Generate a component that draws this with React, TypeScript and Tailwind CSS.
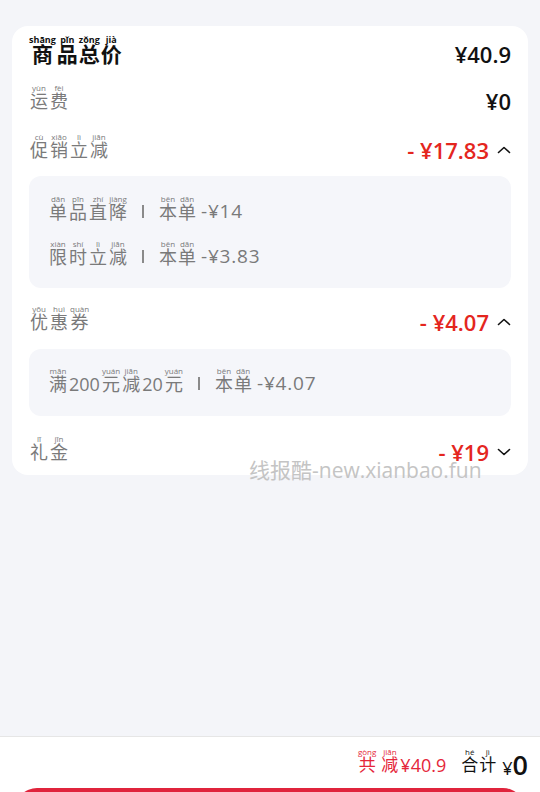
import React from "react";

type Seg = { c: string; p?: string };

const FONT = "font-['Open_Sans','Noto_Sans_CJK_SC',sans-serif]";

// one annotated character: pinyin floats above without taking layout height
function Py({ c, p, pClass, cClass }: { c: string; p: string; pClass: string; cClass: string }) {
	return (
		<span className="inline-flex flex-col items-center">
			<span className="flex h-0 flex-col justify-end">
				<span className={`whitespace-nowrap leading-none ${pClass}`}>{p}</span>
			</span>
			<span className={`leading-none ${cClass}`}>{c}</span>
		</span>
	);
}

function Label({
	segs,
	pClass,
	cClass,
	gap = "gap-[2px]",
}: {
	segs: Seg[];
	pClass: string;
	cClass: string;
	gap?: string;
}) {
	return (
		<span className={`flex items-center ${gap}`}>
			{segs.map((s, i) =>
				s.p ? (
					<Py key={i} c={s.c} p={s.p} pClass={pClass} cClass={cClass} />
				) : (
					<span key={i} className={`leading-none ${cClass}`}>
						{s.c}
					</span>
				),
			)}
		</span>
	);
}

const segs = (chars: string, pinyin: string): Seg[] => {
	const ps = pinyin.split(" ");
	return Array.from(chars).map((c, i) => ({ c, p: ps[i] }));
};

function Caret({ up }: { up: boolean }) {
	return (
		<svg width="14" height="14" viewBox="0 0 14 14" className="ml-[8px]">
			<path
				d={up ? "M1.5 9.5 L7 4.5 L12.5 9.5" : "M1.5 4.5 L7 9.5 L12.5 4.5"}
				fill="none"
				stroke="#111"
				strokeWidth="1.6"
				strokeLinecap="round"
				strokeLinejoin="round"
			/>
		</svg>
	);
}

const grayP = "text-[8px] text-[#7a7a7a]";
const grayC = "text-[18px] text-[#7a7a7a]";

function Sep() {
	return <span className="mx-[15px] h-[13px] w-[2px] bg-[#8a8a8a]" />;
}

function DetailRow({ name, amount }: { name: Seg[]; amount: string }) {
	return (
		<div className="flex h-[45px] items-center">
			<Label segs={name} pClass={grayP} cClass={grayC} />
			<Sep />
			<Label segs={segs("本单", "běn dān")} pClass={grayP} cClass={grayC} gap="gap-[1px]" />
			<span className="ml-[5px] text-[19px] leading-none tracking-[0.8px] text-[#7a7a7a]">
				{amount}
			</span>
		</div>
	);
}

function RedAmount({ value }: { value: string }) {
	return (
		<span className="text-[22px] font-semibold leading-none text-[#e4261e]">
			- {value}
		</span>
	);
}

export default function App() {
	return (
		<div className={`relative flex h-[792px] w-full flex-col overflow-hidden bg-[#f4f5f9] ${FONT}`}>
			<div className="mx-3 mt-[26px] rounded-[16px] bg-white px-[17px] pt-[4px]">
				{/* 商品总价 */}
				<div className="flex h-[48px] items-center justify-between">
					<Label
						segs={segs("商品总价", "shāng pǐn zǒng jià")}
						pClass="text-[9px] font-bold text-[#111]"
						cClass="text-[21px] font-bold text-[#111]"
						gap="gap-[1px]"
					/>
					<span className="text-[22px] font-semibold leading-none text-[#111]">¥40.9</span>
				</div>

				{/* 运费 */}
				<div className="flex h-[46px] items-center justify-between pl-[1px]">
					<Label segs={segs("运费", "yùn fèi")} pClass={grayP} cClass={grayC} />
					<span className="text-[22px] font-semibold leading-none text-[#111]">¥0</span>
				</div>

				{/* 促销立减 */}
				<div className="flex h-[52px] items-center justify-between pl-[1px]">
					<Label segs={segs("促销立减", "cù xiāo lì jiǎn")} pClass={grayP} cClass={grayC} />
					<span className="flex items-center">
						<RedAmount value="¥17.83" />
						<Caret up />
					</span>
				</div>
				<div className="rounded-[12px] bg-[#f5f6fa] pb-[9px] pl-[20px] pt-[13px]">
					<DetailRow name={segs("单品直降", "dān pǐn zhí jiàng")} amount="-¥14" />
					<DetailRow name={segs("限时立减", "xiàn shí lì jiǎn")} amount="-¥3.83" />
				</div>

				{/* 优惠券 */}
				<div className="flex h-[61px] items-center justify-between pl-[1px] pt-[7px]">
					<Label segs={segs("优惠券", "yōu huì quàn")} pClass={grayP} cClass={grayC} />
					<span className="flex items-center">
						<RedAmount value="¥4.07" />
						<Caret up />
					</span>
				</div>
				<div className="rounded-[12px] bg-[#f5f6fa] pb-[10px] pl-[20px] pt-[12px]">
					<DetailRow
						name={[
							{ c: "满", p: "mǎn" },
							{ c: "200" },
							{ c: "元", p: "yuán" },
							{ c: "减", p: "jiǎn" },
							{ c: "20" },
							{ c: "元", p: "yuán" },
						]}
						amount="-¥4.07"
					/>
				</div>

				{/* 礼金 */}
				<div className="flex h-[59px] items-center justify-between pl-[1px] pt-[13px]">
					<Label segs={segs("礼金", "lǐ jīn")} pClass={grayP} cClass={grayC} />
					<span className="flex items-center">
						<RedAmount value="¥19" />
						<Caret up={false} />
					</span>
				</div>
			</div>

			<div className="flex-1" />

			{/* bottom bar */}
			<div className="h-[56px] overflow-hidden border-t border-[#e6e6e6] bg-white">
				<div className="flex h-[51px] items-center justify-end pr-[12px] pt-[4px]">
					<Label
						segs={segs("共减", "gòng jiǎn")}
						pClass="text-[8px] text-[#e5263a]"
						cClass="text-[17px] text-[#e5263a]"
						gap="gap-[5px]"
					/>
					<span className="ml-[2px] text-[18px] leading-none text-[#e5263a]">¥40.9</span>
					<span className="ml-[15px]">
						<Label
							segs={segs("合计", "hé jì")}
							pClass="text-[8px] text-[#111]"
							cClass="text-[17px] text-[#111]"
							gap="gap-[1px]"
						/>
					</span>
					<span className="ml-[6px] flex items-baseline text-[#111]">
						<span className="text-[18px] leading-none">¥</span>
						<span className="text-[27px] font-semibold leading-none">0</span>
					</span>
				</div>
				<div className="mx-[15px] h-[44px] rounded-full bg-[#e0243c]" />
			</div>

			{/* watermark */}
			<div className="absolute left-[249px] top-[460px] whitespace-nowrap text-[21px] leading-none text-[#c4c4c4]">
				线报酷-new.xianbao.fun
			</div>
		</div>
	);
}
